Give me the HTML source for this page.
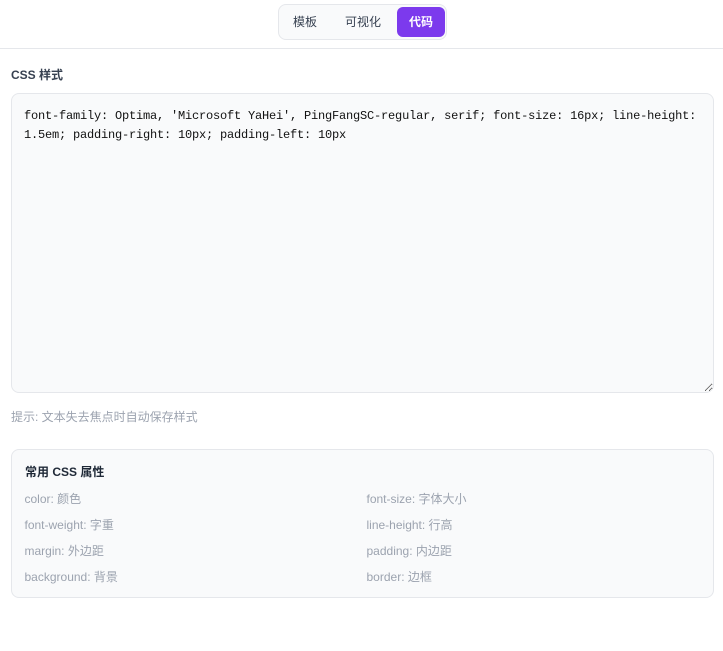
<!DOCTYPE html>
<html lang="zh"><head><meta charset="utf-8"><style>
*{box-sizing:border-box}
html,body{margin:0;padding:0;width:723px;height:651px;background:#fff;overflow:hidden;font-family:"Liberation Sans","Noto Sans CJK SC",sans-serif}
.abs{position:absolute;white-space:nowrap}
.top{position:absolute;left:0;top:0;width:723px;height:49px;border-bottom:1px solid #e5e7eb}
.seg{position:absolute;left:278px;top:4px;width:169px;height:36px;background:#f9fafb;border:1px solid #e5e7eb;border-radius:8px}
.tab{position:absolute;top:12px;height:20px;line-height:20px;font-size:12px;color:#374151;white-space:nowrap}
.act{position:absolute;left:397px;top:7px;width:48px;height:30px;background:#7c3aed;border-radius:6px;color:#fff;font-size:12px;font-weight:700;line-height:30px;text-align:center}
textarea{position:absolute;left:11px;top:93px;width:703px;height:300px;margin:0;padding:13px 12px 12px;background:#f9fafb;border:1px solid #e5e7eb;border-radius:8px;color:#111;font-family:"Liberation Mono","Noto Sans CJK SC",monospace;font-size:12px;letter-spacing:-.2px;line-height:19px;resize:both;outline:none;overflow:hidden}
.panel{position:absolute;left:11px;top:449px;width:703px;height:149px;background:#f9fafb;border:1px solid #e5e7eb;border-radius:8px}
.p{font-size:12px;color:#9ca3af;line-height:16px}
</style></head><body>
<div class="top"></div>
<div class="seg"></div>
<div class="tab" style="left:293px">模板</div>
<div class="tab" style="left:345px">可视化</div>
<div class="act">代码</div>
<div class="abs" style="left:11px;top:65px;font-size:12px;font-weight:700;color:#374151;line-height:20px">CSS 样式</div>
<textarea spellcheck="false">font-family: Optima, 'Microsoft YaHei', PingFangSC-regular, serif; font-size: 16px; line-height: 1.5em; padding-right: 10px; padding-left: 10px</textarea>
<div class="abs" style="left:11px;top:409px;font-size:12px;color:#9ca3af;line-height:16px">提示: 文本失去焦点时自动保存样式</div>
<div class="panel"></div>
<div class="abs" style="left:25px;top:462px;font-size:12px;font-weight:700;color:#1f2937;line-height:20px">常用 CSS 属性</div>
<div class="abs p" style="left:24.5px;top:491px">color: 颜色</div>
<div class="abs p" style="left:366.5px;top:491px">font-size: 字体大小</div>
<div class="abs p" style="left:24.5px;top:517px">font-weight: 字重</div>
<div class="abs p" style="left:366.5px;top:517px">line-height: 行高</div>
<div class="abs p" style="left:24.5px;top:543px">margin: 外边距</div>
<div class="abs p" style="left:366.5px;top:543px">padding: 内边距</div>
<div class="abs p" style="left:24.5px;top:569px">background: 背景</div>
<div class="abs p" style="left:366.5px;top:569px">border: 边框</div>
</body></html>
